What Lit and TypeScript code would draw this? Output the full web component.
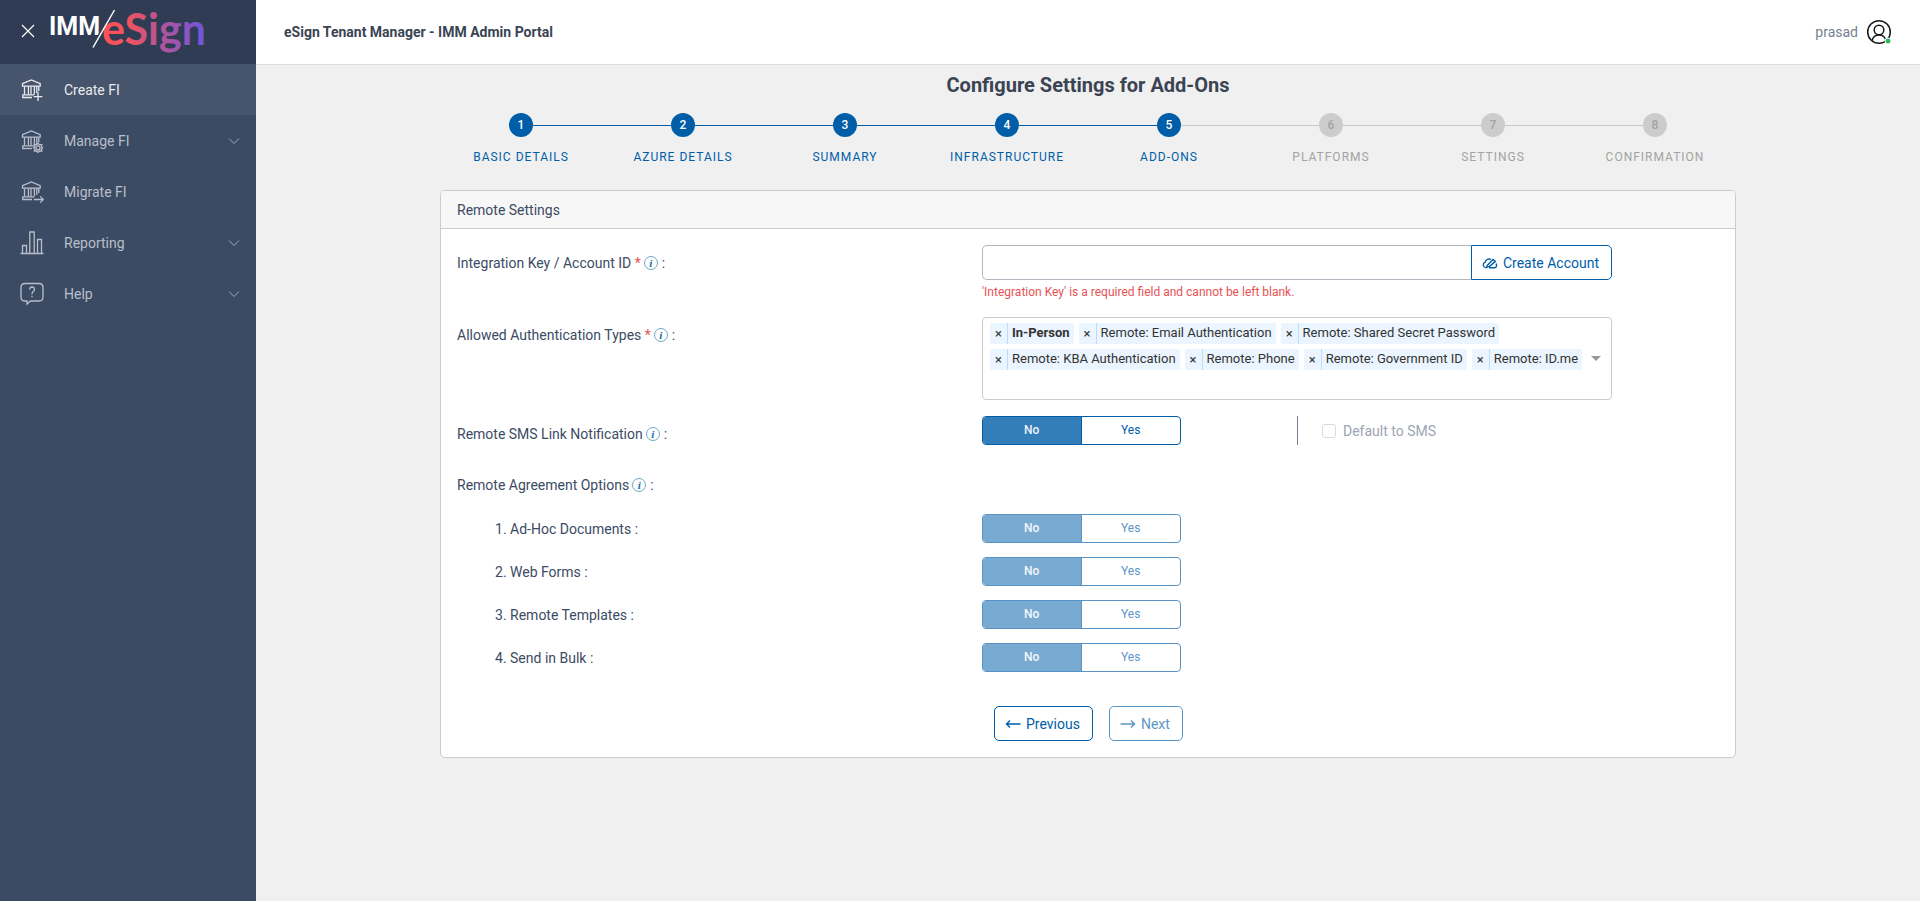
import { LitElement, html, css, svg, nothing } from "lit";
import { customElement, property, state } from "lit/decorators.js";
import { classMap } from "lit/directives/class-map.js";

const bank = svg`
  <path d="M2.5 5.6 L11.4 2 L20.2 5.6 V8.2 H2.5 Z" />
  <path d="M4.5 8.2 V16.5 M8.4 8.2 V16.5 M11 8.2 V16.5 M14.4 8.2 V16.5 M16.8 8.2 V15 M18.8 8.2 V13" />
  <path d="M14 16.8 H2.8 V19.5" />`;

const navIcons: Record<string, unknown> = {
  create: svg`${bank}<path d="M2.2 19.5 H12 M18 14 V23 M13.6 18.6 H22.4" />`,
  manage: svg`${bank}<path d="M2.2 19.5 H12" />
    <path d="M18 14 L19.2 15.6 H21.8 L21.4 17.6 L22.6 18.8 L21.4 20 L21.8 22 H19.2 L18 23.4 L16.8 22 H14.4 L14.8 20 L13.6 18.8 L14.8 17.6 L14.4 15.6 H16.8 Z" fill="#3c4b64" />
    <circle cx="18" cy="18.8" r="2" />`,
  migrate: svg`${bank}<path d="M2.2 19.5 H12 M13.8 19.5 H23.2 M20.2 16.4 L23.4 19.5 L20.2 22.6" />`,
  reporting: svg`<path d="M0.5 22.5 H23.5 M2.5 22.5 V14.5 H6.5 V22.5 M9.8 22.5 V1 H14.2 V22.5 M17.5 22.5 V8.5 H21.5 V22.5" />`,
  help: svg`<path d="M5 1.5 H19 Q23 1.5 23 5.5 V15 Q23 19 19 19 H10.5 L7 22 V19 H5 Q1 19 1 15 V5.5 Q1 1.5 5 1.5 Z" />
    <path d="M9.6 7.6 Q9.6 5 12 5 Q14.4 5 14.4 7.4 Q14.4 8.8 13 9.8 Q12 10.6 12 12.2 M12 13.8 V15.2" />`,
};

@customElement("info-hint")
class InfoHint extends LitElement {
  static styles = css`
    :host { display: inline-flex; vertical-align: middle; margin: 0 4px 3px 3px; }
    .ring {
      width: 14px; height: 14px; box-sizing: border-box; border: 1px solid #6fa8c2; border-radius: 50%;
      display: flex; align-items: center; justify-content: center; color: #0a6fae;
      font: italic bold 11px/12px "Liberation Serif", serif;
    }
  `;
  render() {
    return html`<span class="ring">i</span>`;
  }
}

@customElement("yes-no")
class YesNo extends LitElement {
  @property() label = "";
  @property({ type: Boolean }) disabled = false;
  @state() private value = "No";

  static styles = css`
    :host { display: block; }
    .group {
      display: grid; grid-template-columns: 1fr 1fr; width: 199px; height: 29px; margin: 0; padding: 0;
      box-sizing: border-box; border: 1px solid #005ea8; border-radius: 4px; overflow: hidden; background: #fff;
    }
    .muted { opacity: 0.65; }
    .option {
      display: flex; align-items: center; justify-content: center; padding-bottom: 2px;
      font-size: 12px; line-height: 18px; color: #005ea8;
    }
    .option:first-of-type { border-right: 1px solid #005ea8; }
    .chosen { background: #337eb9; color: #eef4f9; font-weight: 500; }
    .radio { appearance: none; width: 0; height: 0; margin: 0; }
  `;
  render() {
    return html`<div class=${classMap({ group: true, muted: this.disabled })} role="radiogroup" aria-label=${this.label}>
      ${["No", "Yes"].map(
        (o) => html`<label class=${classMap({ option: true, chosen: this.value === o })}>
          <input class="radio" type="radio" name="choice" .checked=${this.value === o}
            ?disabled=${this.disabled} @change=${() => (this.value = o)} />${o}</label>`
      )}
    </div>`;
  }
}

@customElement("side-nav")
class SideNav extends LitElement {
  private items = [
    { icon: "create", text: "Create FI", active: true },
    { icon: "manage", text: "Manage FI", more: true },
    { icon: "migrate", text: "Migrate FI" },
    { icon: "reporting", text: "Reporting", more: true },
    { icon: "help", text: "Help", more: true },
  ];
  static styles = css`
    :host { display: flex; flex-direction: column; width: 256px; flex: none; background: #3c4b64; }
    .brand { display: flex; align-items: center; height: 64px; padding-left: 20px; background: #303c54; }
    .close { width: 16px; height: 16px; padding: 0; border: 0; background: none; color: #fff; display: flex; }
    .close svg { width: 16px; height: 16px; }
    .logo { width: 164px; height: 64px; margin-left: 12px; }
    .item {
      display: flex; align-items: center; height: 51px; padding: 0 16px 0 20px; gap: 20px; box-sizing: border-box;
      color: #b9bfc9; text-decoration: none; font-size: 14px; line-height: 21px;
    }
    .active { background: #46546c; color: #e9ebee; }
    .text { flex: 1; padding-top: 2px; }
    .icon { width: 24px; height: 24px; fill: none; stroke: currentColor; stroke-width: 1.3; }
    .chev { width: 12px; height: 12px; fill: none; stroke: #a0a8b4; stroke-width: 1; }
  `;
  render() {
    return html`
      <div class="brand">
        <button class="close" aria-label="Close menu">
          <svg viewBox="0 0 16 16" fill="none" stroke="currentColor" stroke-width="1.2"><path d="M2 1 L14 13 M14 1 L2 13" /></svg>
        </button>
        <svg class="logo" viewBox="48 0 164 64" role="img" aria-label="IMM eSign">
          <defs>
            <linearGradient id="warm" gradientUnits="userSpaceOnUse" x1="104" y1="0" x2="206" y2="0">
              <stop offset="0" stop-color="#ff5157" /><stop offset="0.25" stop-color="#f0525f" />
              <stop offset="0.55" stop-color="#b5559a" /><stop offset="1" stop-color="#6a57dd" />
            </linearGradient>
          </defs>
          <text x="49" y="35" font-family="Roboto, sans-serif" font-weight="700" font-size="25" fill="#fff">IMM</text>
          <path d="M93 47.5 L114.5 10" stroke="#303c54" stroke-width="4" />
          <text x="102" y="45" font-family="Lato, sans-serif" font-weight="700" font-size="43" fill="url(#warm)">eSign</text>
          <path d="M93 47.5 L114.5 10" stroke="#fff" stroke-width="1.5" />
        </svg>
      </div>
      <nav>
        ${this.items.map(
          (i) => html`<a href="#" class=${classMap({ item: true, active: !!i.active })}>
            <svg class="icon" viewBox="0 0 24 24">${navIcons[i.icon]}</svg>
            <span class="text">${i.text}</span>
            ${i.more ? html`<svg class="chev" viewBox="0 0 12 12"><path d="M1 3.5 L6 8.5 L11 3.5" /></svg>` : nothing}
          </a>`
        )}
      </nav>`;
  }
}

@customElement("step-track")
class StepTrack extends LitElement {
  @property({ type: Number }) current = 5;
  private steps = ["Basic Details", "Azure Details", "Summary", "Infrastructure", "Add-Ons", "Platforms", "Settings", "Confirmation"];
  static styles = css`
    :host { display: block; }
    .track { display: grid; grid-template-columns: repeat(8, 1fr); margin: 0; padding: 0; list-style: none; }
    .step { display: flex; flex-direction: column; align-items: center; gap: 10px; color: #a3a3a3; }
    .rail { display: grid; grid-template-columns: 1fr 24px 1fr; align-items: center; width: 100%; }
    .line { height: 1px; background: #c8c8c8; }
    .reached { background: #005ea8; }
    .none { background: none; }
    .dot {
      height: 24px; border-radius: 50%; background: #ccc; text-align: center;
      font-size: 12px; line-height: 25px; font-weight: 500;
    }
    .done { color: #005ea8; }
    .done .dot { background: #005ea8; color: #fff; }
    .name { font-size: 12px; line-height: 20px; letter-spacing: 1px; text-transform: uppercase; white-space: nowrap; }
  `;
  render() {
    return html`<ol class="track">
      ${this.steps.map((s, k) => {
        const n = k + 1;
        return html`<li class=${classMap({ step: true, done: n <= this.current })}>
          <span class="rail">
            <span class=${classMap({ line: true, none: n === 1, reached: n > 1 && n <= this.current })}></span>
            <span class="dot">${n}</span>
            <span class=${classMap({ line: true, none: n === this.steps.length, reached: n < this.current })}></span>
          </span>
          <span class="name">${s}</span>
        </li>`;
      })}
    </ol>`;
  }
}

@customElement("app-root")
class AppRoot extends LitElement {
  @state() private types = [
    "In-Person", "Remote: Email Authentication", "Remote: Shared Secret Password", "Remote: KBA Authentication",
    "Remote: Phone", "Remote: Government ID", "Remote: ID.me",
  ];
  private options = ["Ad-Hoc Documents", "Web Forms", "Remote Templates", "Send in Bulk"];

  static styles = css`
    :host { display: flex; min-height: 100vh; background: #f0f0f0; color: #3c4b64; font: 14px/21px Roboto, sans-serif; }
    * { box-sizing: border-box; }
    button, input { font: inherit; }
    .page { flex: 1; min-width: 0; }
    .top {
      display: flex; align-items: center; justify-content: space-between; height: 65px; padding: 0 28px;
      background: #fff; border-bottom: 1px solid #d8dbe0; color: #3b4453;
    }
    .product { font-weight: 700; }
    .user { display: flex; align-items: center; gap: 8px; color: #768192; }
    .avatar { width: 26px; height: 26px; }
    .content { padding: 8px 184px 0; }
    .title { margin: 0 0 16px; text-align: center; font-size: 20px; line-height: 24px; font-weight: 700; color: #3b4453; }
    .card { margin-top: 23px; background: #fff; border: 1px solid #ccc; border-radius: 5px; overflow: hidden; }
    .head { margin: 0; padding: 9px 16px 7px; font-size: 14px; line-height: 21px; font-weight: 400; background: #f7f7f7; border-bottom: 1px solid #ccc; }
    .body { padding: 16px 18px 16px 16px; }
    .row { display: grid; grid-template-columns: repeat(12, 1fr); }
    .label { grid-column: span 5; padding-top: 8px; }
    .field { grid-column: span 6; }
    .third { grid-column: span 3; }
    .star { color: #e55353; }
    .group { display: flex; height: 35px; }
    .key { flex: 1; min-width: 0; border: 1px solid #b1b7c1; border-right: 0; border-radius: 5px 0 0 5px; padding: 0 12px; background: #fff; }
    .btn {
      display: inline-flex; align-items: center; height: 35px; padding: 1px 12px 0 10px; gap: 5px; border: 1px solid #005ea8;
      border-radius: 5px; background: #fff; color: #005ea8;
    }
    .btn svg { fill: none; stroke: currentColor; stroke-width: 1.4; }
    .joined { border-radius: 0 5px 5px 0; }
    .btn:disabled { opacity: 0.65; }
    .error { margin: 3px 0 16px; font-size: 12px; line-height: 18px; color: #e55353; }
    .multi { display: flex; align-items: center; height: 83px; border: 1px solid #ccc; border-radius: 4px; padding-right: 10px; }
    .chips { flex: 1; display: flex; flex-wrap: wrap; align-content: flex-start; gap: 5px; height: 81px; padding: 5px 0 0 7px; color: #333; }
    .chip { display: flex; height: 21px; background: #ebf5ff; border-radius: 2px; font-size: 13px; line-height: 20px; }
    .drop { width: 18px; padding: 0; border: 0; border-right: 1px solid #b8dbff; background: none; color: #333; font-size: 13px; line-height: 20px; }
    .value { padding: 0 4px; }
    .fixed { font-weight: 700; }
    .search { width: 40px; height: 20px; border: 0; padding: 0; background: none; outline: 0; }
    .arrow { width: 0; border: 5px solid transparent; border-top-color: #999; border-bottom: 0; }
    .sms { margin-top: 16px; }
    .aside { display: flex; align-items: center; gap: 7px; height: 29px; border-left: 1px solid #768192; padding: 1px 0 0 24px; color: #9da5b1; }
    .tick { appearance: none; width: 14px; height: 14px; margin: 0; border: 1px solid #d8dbe0; border-radius: 3px; background: #fff; }
    .agreement { margin: 22px 0 18px; }
    .options { display: grid; gap: 14px; margin: 0; padding: 0; list-style: none; }
    .options .label { padding: 5px 0 3px 38px; }
    .pair { grid-column: 6 / span 7; display: flex; gap: 16px; margin-top: 34px; padding-left: 12px; }
  `;

  render() {
    return html`
      <side-nav></side-nav>
      <div class="page">
        <header class="top">
          <span class="product">eSign Tenant Manager - IMM Admin Portal</span>
          <span class="user">prasad
            <svg class="avatar" viewBox="0 0 26 26" fill="none" stroke="#16181d" stroke-width="1.5">
              <circle cx="13" cy="13" r="11.3" /><circle cx="13" cy="11" r="4.8" />
              <path d="M6 21.5 Q7.5 16 13 16 Q18.5 16 20 21.5" />
              <circle cx="22" cy="22" r="3" fill="#2eb85c" stroke="#fff" stroke-width="1" />
            </svg>
          </span>
        </header>
        <main class="content">
          <h1 class="title">Configure Settings for Add-Ons</h1>
          <step-track .current=${5}></step-track>
          <section class="card">
            <h2 class="head">Remote Settings</h2>
            <div class="body">
              <div class="row">
                <label class="label" for="key">Integration Key / Account ID <span class="star">*</span><info-hint></info-hint>:</label>
                <div class="field">
                  <div class="group">
                    <input class="key" id="key" type="text" />
                    <button class="btn joined">
                      <svg width="16" height="12" viewBox="0 0 16 12"><path d="M5 10.6 H3.6 A2.7 2.7 0 0 1 3 5.4 A4.2 4.2 0 0 1 9 2.4 M5.2 8.6 L11 2.4 L13.4 4.4 L7.6 9.4 L4.8 10 Z M7 10.8 H12.4 A2.4 2.4 0 0 0 13.8 6.6" /></svg>
                      Create Account
                    </button>
                  </div>
                  <p class="error">'Integration Key' is a required field and cannot be left blank.</p>
                </div>
              </div>
              <div class="row">
                <label class="label" for="types">Allowed Authentication Types <span class="star">*</span><info-hint></info-hint>:</label>
                <div class="field multi">
                  <div class="chips">
                    ${this.types.map(
                      (t, k) => html`<span class="chip">
                        <button class="drop" aria-label="Remove ${t}" @click=${() => (this.types = this.types.filter((x) => x !== t))}>×</button>
                        <span class=${classMap({ value: true, fixed: k === 0 })}>${t}</span>
                      </span>`
                    )}
                    <input class="search" id="types" role="combobox" aria-expanded="false" />
                  </div>
                  <span class="arrow"></span>
                </div>
              </div>
              <div class="row sms">
                <div class="label">Remote SMS Link Notification<info-hint></info-hint>:</div>
                <yes-no class="third" label="Remote SMS Link Notification"></yes-no>
                <label class="third aside"><input class="tick" type="checkbox" disabled />Default to SMS</label>
              </div>
              <div class="row agreement">
                <div class="label">Remote Agreement Options<info-hint></info-hint>:</div>
              </div>
              <ol class="options">
                ${this.options.map(
                  (o, k) => html`<li class="row">
                    <div class="label">${k + 1}. ${o} :</div>
                    <yes-no class="third" label=${o} disabled></yes-no>
                  </li>`
                )}
              </ol>
              <div class="row">
                <div class="pair">
                  <button class="btn">
                    <svg width="16" height="10" viewBox="0 0 16 10"><path d="M15.5 5 H1.5 M5 1.5 L1.5 5 L5 8.5" /></svg>Previous
                  </button>
                  <button class="btn" disabled>
                    <svg width="16" height="10" viewBox="0 0 16 10"><path d="M0.5 5 H14.5 M11 1.5 L14.5 5 L11 8.5" /></svg>Next
                  </button>
                </div>
              </div>
            </div>
          </section>
        </main>
      </div>`;
  }
}
